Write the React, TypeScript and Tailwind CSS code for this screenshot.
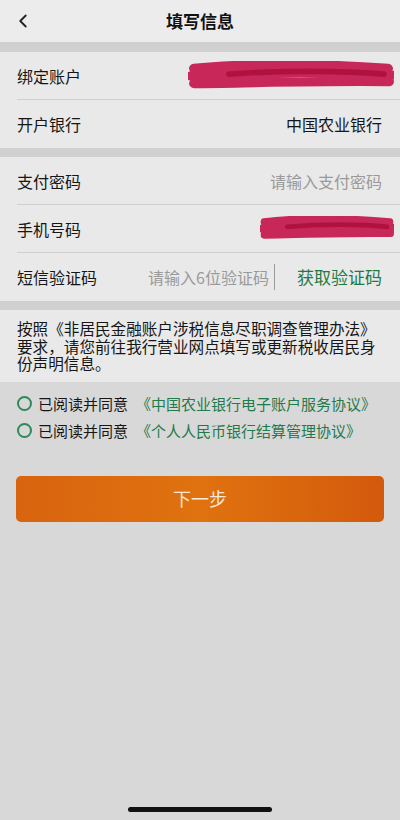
import { ChevronLeft } from 'lucide-react'

const font = { fontFamily: '"Noto Sans CJK SC", "Noto Sans", sans-serif' }

function Scribble({ className }: { className: string }) {
  return (
    <svg viewBox="0 0 200 32" preserveAspectRatio="none" className={className}>
      <path
        d="M6 8 C50 3 120 2 194 8 M3 16 C60 12 130 11 198 15 M6 24 C70 23 140 21 195 22"
        stroke="#c4174c"
        strokeWidth="10"
        strokeLinecap="round"
        fill="none"
        opacity="0.92"
      />
      <path d="M40 14 C90 10 150 10 190 14" stroke="#b0123f" strokeWidth="6" strokeLinecap="round" fill="none" />
    </svg>
  )
}

function Row({ label, children, last }: { label: string; children?: React.ReactNode; last?: boolean }) {
  return (
    <div className={`ml-[17px] flex h-[48px] items-center justify-between pr-[18px] ${last ? '' : 'border-b border-[#cfcfcf]'}`}>
      <span className="text-[16px] text-[#161616]">{label}</span>
      {children}
    </div>
  )
}

function Agree({ doc }: { doc: string }) {
  return (
    <div className="flex items-center text-[15px] leading-[27px]">
      <span className="mr-[6px] h-[15px] w-[15px] rounded-full border-2 border-[#2f8a5a]" />
      <span className="text-[#161616]">已阅读并同意</span>
      <span className="ml-[8px] text-[#1f7a4c]">{doc}</span>
    </div>
  )
}

export default function App() {
  return (
    <div className="flex min-h-[820px] w-[400px] flex-col bg-[#d8d8d8]" style={font}>
      <div className="relative flex h-[42px] items-center justify-center bg-[#ececec]">
        <ChevronLeft className="absolute left-[12px] h-[22px] w-[22px] text-[#222]" strokeWidth={2} />
        <span className="text-[17px] font-bold text-[#111]">填写信息</span>
      </div>

      <div className="h-[10px] bg-[#d0d0d0]" />

      <div className="bg-[#e9e9e9]">
        <Row label="绑定账户">
          <Scribble className="mr-[-12px] h-[30px] w-[206px]" />
        </Row>
        <Row label="开户银行" last>
          <span className="text-[16px] text-[#161616]">中国农业银行</span>
        </Row>
      </div>

      <div className="h-[9px] bg-[#d0d0d0]" />

      <div className="bg-[#e9e9e9]">
        <Row label="支付密码">
          <span className="text-[16px] text-[#9a9a9a]">请输入支付密码</span>
        </Row>
        <Row label="手机号码">
          <Scribble className="mr-[-12px] h-[25px] w-[134px]" />
        </Row>
        <Row label="短信验证码" last>
          <div className="flex items-center">
            <span className="text-[16px] text-[#9a9a9a]">请输入6位验证码</span>
            <span className="ml-[5px] mr-[22px] h-[26px] w-px bg-[#9a9a9a]" />
            <span className="text-[17px] text-[#1e7a45]">获取验证码</span>
          </div>
        </Row>
      </div>

      <div className="h-[9px] bg-[#d0d0d0]" />

      <div className="bg-[#e9e9e9] px-[17px] pb-[9px] pt-[10px] text-[15.6px] leading-[17.5px] text-[#161616]">
        按照《非居民金融账户涉税信息尽职调查管理办法》要求，请您前往我行营业网点填写或更新税收居民身份声明信息。
      </div>

      <div className="px-[17px] pt-[8px]">
        <Agree doc="《中国农业银行电子账户服务协议》" />
        <Agree doc="《个人人民币银行结算管理协议》" />
      </div>

      <button className="mx-[16px] mt-[32px] flex h-[46px] items-center justify-center rounded-[5px] bg-gradient-to-r from-[#d8640f] via-[#e0720f] to-[#d35a0c] text-[18px] text-[#fbe9d6]">
        下一步
      </button>

      <div className="mt-auto flex justify-center pb-[8px]">
        <div className="h-[5px] w-[144px] rounded-full bg-[#111]" />
      </div>
    </div>
  )
}
